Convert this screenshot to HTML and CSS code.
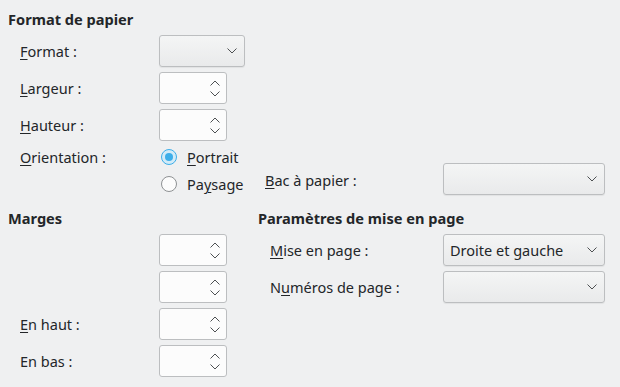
FILE: index.html
```html
<!DOCTYPE html>
<html lang="fr">
<head>
    <meta charset="UTF-8">
    <title>Page</title>
    <link rel="stylesheet" href="styles.css">
</head>
<body>
    <div class="page">
        <h3 class="heading">Format de papier</h3>
        <div class="paper-grid">
            <label class="label"><u>F</u>ormat :</label>
            <div class="combo combo-small">
                <span class="combo-text"></span>
                <svg class="chevron" width="10" height="6" viewBox="0 0 10 6"><polyline points="0.5,0.5 5,5 9.5,0.5"/></svg>
            </div>

            <label class="label row-2"><u>L</u>argeur :</label>
            <div class="spin row-2">
                <div class="spin-arrows">
                    <svg width="10" height="6" viewBox="0 0 10 6"><polyline points="0.5,5.5 5,1 9.5,5.5"/></svg>
                    <svg width="10" height="6" viewBox="0 0 10 6"><polyline points="0.5,0.5 5,5 9.5,0.5"/></svg>
                </div>
            </div>

            <label class="label row-3"><u>H</u>auteur :</label>
            <div class="spin row-3">
                <div class="spin-arrows">
                    <svg width="10" height="6" viewBox="0 0 10 6"><polyline points="0.5,5.5 5,1 9.5,5.5"/></svg>
                    <svg width="10" height="6" viewBox="0 0 10 6"><polyline points="0.5,0.5 5,5 9.5,0.5"/></svg>
                </div>
            </div>

            <label class="label row-4"><u>O</u>rientation :</label>
            <div class="radio row-4 checked">
                <span class="radio-mark"></span>
                <span><u>P</u>ortrait</span>
            </div>
            <div class="radio row-5">
                <span class="radio-mark"></span>
                <span>Pa<u>y</u>sage</span>
            </div>

            <label class="label tray-label"><u>B</u>ac à papier :</label>
            <div class="combo combo-wide tray-combo">
                <span class="combo-text"></span>
                <svg class="chevron" width="10" height="6" viewBox="0 0 10 6"><polyline points="0.5,0.5 5,5 9.5,0.5"/></svg>
            </div>
        </div>

        <div class="lower">
            <div class="margins">
                <h3 class="heading">Marges</h3>
                <div class="margin-grid">
                    <span class="label"></span>
                    <div class="spin">
                        <div class="spin-arrows">
                            <svg width="10" height="6" viewBox="0 0 10 6"><polyline points="0.5,5.5 5,1 9.5,5.5"/></svg>
                            <svg width="10" height="6" viewBox="0 0 10 6"><polyline points="0.5,0.5 5,5 9.5,0.5"/></svg>
                        </div>
                    </div>
                    <span class="label"></span>
                    <div class="spin">
                        <div class="spin-arrows">
                            <svg width="10" height="6" viewBox="0 0 10 6"><polyline points="0.5,5.5 5,1 9.5,5.5"/></svg>
                            <svg width="10" height="6" viewBox="0 0 10 6"><polyline points="0.5,0.5 5,5 9.5,0.5"/></svg>
                        </div>
                    </div>
                    <label class="label"><u>E</u>n haut :</label>
                    <div class="spin">
                        <div class="spin-arrows">
                            <svg width="10" height="6" viewBox="0 0 10 6"><polyline points="0.5,5.5 5,1 9.5,5.5"/></svg>
                            <svg width="10" height="6" viewBox="0 0 10 6"><polyline points="0.5,0.5 5,5 9.5,0.5"/></svg>
                        </div>
                    </div>
                    <label class="label">En bas :</label>
                    <div class="spin">
                        <div class="spin-arrows">
                            <svg width="10" height="6" viewBox="0 0 10 6"><polyline points="0.5,5.5 5,1 9.5,5.5"/></svg>
                            <svg width="10" height="6" viewBox="0 0 10 6"><polyline points="0.5,0.5 5,5 9.5,0.5"/></svg>
                        </div>
                    </div>
                </div>
            </div>

            <div class="layout">
                <h3 class="heading">Paramètres de mise en page</h3>
                <div class="layout-grid">
                    <label class="label"><u>M</u>ise en page :</label>
                    <div class="combo combo-wide">
                        <span class="combo-text">Droite et gauche</span>
                        <svg class="chevron" width="10" height="6" viewBox="0 0 10 6"><polyline points="0.5,0.5 5,5 9.5,0.5"/></svg>
                    </div>
                    <label class="label">N<u>u</u>méros de page :</label>
                    <div class="combo combo-wide">
                        <span class="combo-text"></span>
                        <svg class="chevron" width="10" height="6" viewBox="0 0 10 6"><polyline points="0.5,0.5 5,5 9.5,0.5"/></svg>
                    </div>
                </div>
            </div>
        </div>
    </div>
</body>
</html>
```

FILE: styles.css
```css
body {
    margin: 0;
    padding: 0;
    background-color: #eff0f1;
    color: #232629;
    font-family: "Noto Sans", sans-serif;
    font-size: 14.5px;
}
.page {
    padding: 10px 8px 0 8px;
}
.heading {
    margin: 0 0 7px 0;
    height: 18px;
    line-height: 18px;
    font-size: 14.6px;
    font-weight: bold;
}
u {
    text-decoration-thickness: 1px;
    text-underline-offset: 2px;
}
.label {
    display: flex;
    align-items: center;
    white-space: nowrap;
}

/* format de papier */
.paper-grid {
    display: grid;
    margin-left: 12px;
    grid-template-columns: 139px 106px 178px 162px;
    grid-template-rows: 32px 32px 32px 22px 22px;
    row-gap: 5px;
}
.row-2 { grid-row: 2; }
.row-3 { grid-row: 3; }
.row-4 { grid-row: 4; }
.row-5 { grid-row: 5; grid-column: 2; }
.tray-label {
    grid-column: 3;
    grid-row: 4 / 6;
    align-self: end;
    height: 31px;
}
.tray-combo {
    grid-column: 4;
    grid-row: 4 / 6;
    align-self: end;
    height: 31px;
}

/* controls */
.combo {
    box-sizing: border-box;
    display: flex;
    align-items: center;
    justify-content: space-between;
    height: 32px;
    padding: 0 7px 0 6px;
    border: 1px solid #bcbec0;
    border-radius: 3px;
    background: linear-gradient(#f4f5f5, #e9eaeb);
    box-shadow: 0 1px 1px rgba(0, 0, 0, 0.06);
}
.combo-small {
    width: 86px;
}
.combo-wide {
    width: 162px;
}
.chevron polyline,
.spin-arrows polyline {
    fill: none;
    stroke: #4d5052;
    stroke-width: 1;
}
.spin {
    box-sizing: border-box;
    display: flex;
    justify-content: flex-end;
    align-items: center;
    width: 68px;
    height: 32px;
    padding-right: 6px;
    border: 1px solid #bcbec0;
    border-radius: 3px;
    background-color: #fcfcfc;
}
.spin-arrows {
    display: flex;
    flex-direction: column;
    gap: 5px;
}
.spin-arrows svg {
    display: block;
}
.radio {
    display: flex;
    align-items: center;
    gap: 10px;
    padding-left: 2px;
}
.radio-mark {
    box-sizing: border-box;
    position: relative;
    width: 16px;
    height: 16px;
    border: 1px solid #8e9193;
    border-radius: 50%;
    background-color: #fcfcfc;
}
.radio.checked .radio-mark {
    border-color: #3daee9;
    background-color: #d2ebf8;
}
.radio.checked .radio-mark::after {
    content: "";
    position: absolute;
    left: 3px;
    top: 3px;
    width: 8px;
    height: 8px;
    border-radius: 50%;
    background-color: #3daee9;
}

/* marges + mise en page */
.lower {
    display: flex;
    margin-top: 14px;
}
.margins {
    width: 250px;
}
.margin-grid {
    display: grid;
    margin-left: 12px;
    grid-template-columns: 139px 68px;
    grid-auto-rows: 32px;
    row-gap: 5px;
}
.layout-grid {
    display: grid;
    margin-left: 12px;
    grid-template-columns: 173px 162px;
    grid-auto-rows: 32px;
    row-gap: 5px;
}
```
